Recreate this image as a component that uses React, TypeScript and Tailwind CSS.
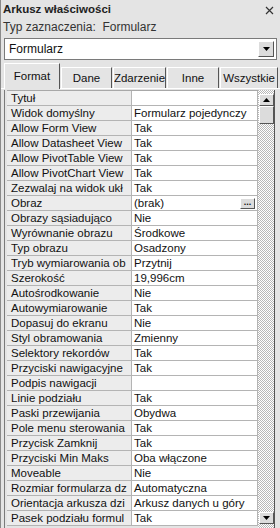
import React from 'react'

const rows: [string, string][] = [
  ['Tytuł', ''],
  ['Widok domyślny', 'Formularz pojedynczy'],
  ['Allow Form View', 'Tak'],
  ['Allow Datasheet View', 'Tak'],
  ['Allow PivotTable View', 'Tak'],
  ['Allow PivotChart View', 'Tak'],
  ['Zezwalaj na widok ukł', 'Tak'],
  ['Obraz', '(brak)'],
  ['Obrazy sąsiadująco', 'Nie'],
  ['Wyrównanie obrazu', 'Środkowe'],
  ['Typ obrazu', 'Osadzony'],
  ['Tryb wymiarowania ob', 'Przytnij'],
  ['Szerokość', '19,996cm'],
  ['Autośrodkowanie', 'Nie'],
  ['Autowymiarowanie', 'Tak'],
  ['Dopasuj do ekranu', 'Nie'],
  ['Styl obramowania', 'Zmienny'],
  ['Selektory rekordów', 'Tak'],
  ['Przyciski nawigacyjne', 'Tak'],
  ['Podpis nawigacji', ''],
  ['Linie podziału', 'Tak'],
  ['Paski przewijania', 'Obydwa'],
  ['Pole menu sterowania', 'Tak'],
  ['Przycisk Zamknij', 'Tak'],
  ['Przyciski Min Maks', 'Oba włączone'],
  ['Moveable', 'Nie'],
  ['Rozmiar formularza dz', 'Automatyczna'],
  ['Orientacja arkusza dzi', 'Arkusz danych u góry'],
  ['Pasek podziału formul', 'Tak'],
]

const tabs = [
  { name: 'Dane', w: 'w-[51px]' },
  { name: 'Zdarzenie', w: 'w-[53px]' },
  { name: 'Inne', w: 'w-[52px]' },
  { name: 'Wszystkie', w: 'flex-1' },
]

// small raised windows-style button with a triangle
function ArrowButton({ down, className }: { down?: boolean; className?: string }) {
  return (
    <div
      className={`flex items-center justify-center bg-[#dcdcdc] border border-t-white border-l-white border-r-[#555] border-b-[#555] ${className ?? ''}`}
    >
      <svg width="7" height="4" viewBox="0 0 7 4">
        {down ? <polygon points="0,0 7,0 3.5,4" fill="#000" /> : <polygon points="0,4 7,4 3.5,0" fill="#000" />}
      </svg>
    </div>
  )
}

export default function App() {
  return (
    <div
      className="w-[280px] h-[528px] overflow-hidden bg-[#e4e4e4] border-l border-[#8a8a8a] text-[#111] flex flex-col"
      style={{ fontFamily: '"Liberation Sans", Arial, sans-serif' }}
    >
      {/* title */}
      <div className="h-[20px] flex items-center justify-between pl-[2px] pr-[6px]">
        <span className="text-[11.5px] font-bold text-[#222]">Arkusz właściwości</span>
        <svg width="9" height="9" viewBox="0 0 9 9">
          <path d="M1 1 L8 8 M8 1 L1 8" stroke="#333" strokeWidth="1.2" />
        </svg>
      </div>
      <div className="h-[14px] flex items-center pl-[2px] text-[12px] text-[#333]">
        Typ zaznaczenia:&nbsp;&nbsp;Formularz
      </div>

      {/* combo */}
      <div className="mt-[4px] mx-[3px] h-[22px] bg-white border border-[#7a7a7a] flex items-center">
        <span className="flex-1 pl-[4px] text-[12px]">Formularz</span>
        <ArrowButton down className="w-[16px] h-[16px] mr-[2px]" />
      </div>

      {/* tabs */}
      <div className="mt-[3px] h-[26px] flex items-end pl-[3px] pr-[2px] text-[11.5px] relative">
        <div className="absolute left-0 right-0 bottom-0 h-px bg-white" />
        <div className="relative z-10 w-[56px] h-[26px] flex items-start justify-center pt-[4px] bg-[#e4e4e4] border-t border-l border-white border-r border-r-[#555]">
          Format
        </div>
        {tabs.map((t) => (
          <div
            key={t.name}
            className={`h-[22px] flex items-center justify-center overflow-hidden whitespace-nowrap border-t border-l border-white border-r border-r-[#555] ml-[1px] ${t.w}`}
          >
            {t.name}
          </div>
        ))}
      </div>

      {/* grid */}
      <div className="flex-1 flex pl-[3px] pr-[5px] pt-[1px] min-h-0">
        <div className="flex-1 flex border-l border-[#7a7a7a] pl-[2px] min-w-0">
          <div className="flex-1 min-w-0 border-t border-[#a8a8a8]">
            {rows.map(([label, value]) => (
              <div key={label} className="h-[15px] flex text-[11.5px] leading-[14px]">
                <div className="w-[125px] shrink-0 bg-[#ececec] border-b border-r border-[#b4b4b4] pl-[4px] overflow-hidden whitespace-nowrap">
                  {label}
                </div>
                <div className="flex-1 bg-white border-b border-r border-[#b4b4b4] pl-[2px] overflow-hidden whitespace-nowrap flex items-center justify-between">
                  <span>{value}</span>
                  {label === 'Obraz' && (
                    <div className="w-[15px] h-[11px] mr-[2px] bg-[#dcdcdc] border border-t-white border-l-white border-r-[#555] border-b-[#555] text-[9px] leading-[6px] font-bold text-center">
                      ...
                    </div>
                  )}
                </div>
              </div>
            ))}
          </div>
          {/* scrollbar */}
          <div className="w-[17px] shrink-0 flex flex-col bg-[repeating-conic-gradient(#ffffff_0%_25%,#b8b8b8_0%_50%)] bg-[length:2px_2px] border-r border-[#555]">
            <ArrowButton className="mt-[4px] w-[15px] h-[12px] ml-[1px]" />
            <div className="w-[15px] h-[18px] ml-[1px] bg-[#dcdcdc] border border-t-white border-l-white border-r-[#555] border-b-[#555]" />
            <div className="flex-1" />
            <ArrowButton down className="w-[15px] h-[12px] ml-[1px] mb-[4px]" />
          </div>
        </div>
      </div>
    </div>
  )
}
